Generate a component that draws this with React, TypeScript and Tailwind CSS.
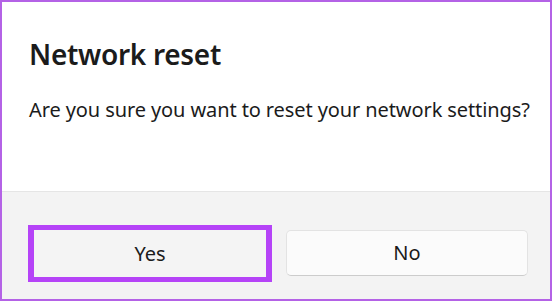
export default function App() {
  return (
    <div className="w-[552px] h-[302px] bg-white" style={{ fontFamily: '"Noto Sans", "Open Sans", sans-serif' }}>
      <div className="flex flex-col w-[552px] h-[301px] border-2 border-[#b462e6] bg-white">
        {/* Content */}
        <div className="flex flex-col h-[189px] px-[27px] pt-[32px]">
          <h1 className="text-[28px] leading-[40px] font-semibold tracking-[-0.3px] text-[#1b1b1b]">Network reset</h1>
          <p className="mt-[22px] text-[20px] leading-[28px] tracking-[-0.1px] whitespace-nowrap text-[#1b1b1b]">
            Are you sure you want to reset your network settings?
          </p>
        </div>

        {/* Footer */}
        <div className="flex flex-1 items-start gap-[14px] pt-[33px] pl-[26px] pr-[22px] bg-[#f3f3f3] border-t border-[#e5e5e5]">
          <div className="w-[244px] h-[57px] border-x-[6px] border-y-[5px] border-[#b543f7]">
            <button className="w-full h-full bg-[#f4f4f4] text-[20px] text-[#1b1b1b]">Yes</button>
          </div>
          <button className="flex-1 h-[46px] mt-[5px] rounded-[5px] bg-[#fbfbfb] border border-[#e3e3e3] border-b-[#cccccc] text-[20px] text-[#1b1b1b]">
            No
          </button>
        </div>
      </div>
    </div>
  )
}
